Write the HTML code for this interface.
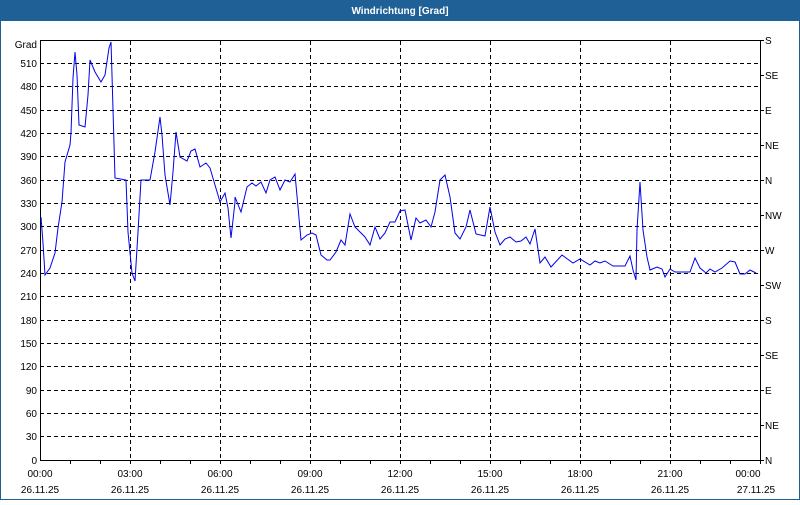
<!DOCTYPE html>
<html><head><meta charset="utf-8"><style>
html,body{margin:0;padding:0;background:#fff}
body{width:800px;height:500px;overflow:hidden;font-family:"Liberation Sans",sans-serif}
</style></head><body>
<svg width="800" height="500" xmlns="http://www.w3.org/2000/svg" font-family="Liberation Sans, sans-serif" font-size="10">
<rect x="0" y="0" width="800" height="500" fill="#1f6196"/>
<rect x="1" y="21" width="798" height="478" fill="#fff"/>
<text x="400" y="14" fill="#fff" font-weight="bold" text-anchor="middle" font-size="10">Windrichtung [Grad]</text>
<g stroke="#000" stroke-dasharray="4,3" stroke-width="1">
<path d="M40 63.5H760M40 86.5H760M40 110.5H760M40 133.5H760M40 156.5H760M40 180.5H760M40 203.5H760M40 226.5H760M40 250.5H760M40 273.5H760M40 296.5H760M40 320.5H760M40 343.5H760M40 366.5H760M40 390.5H760M40 413.5H760M40 436.5H760"/>
<path d="M130.5 41V460M220.5 41V460M310.5 41V460M400.5 41V460M490.5 41V460M580.5 41V460M670.5 41V460"/>
</g>
<rect x="40.5" y="40.5" width="720" height="420" fill="none" stroke="#000"/>
<g stroke="#000">
<path d="M760 40.5h4M760 75.5h4M760 110.5h4M760 145.5h4M760 180.5h4M760 215.5h4M760 250.5h4M760 285.5h4M760 320.5h4M760 355.5h4M760 390.5h4M760 425.5h4M760 460.5h4"/>
<path d="M70.5 460v4M100.5 460v4M130.5 460v4M160.5 460v4M190.5 460v4M220.5 460v4M250.5 460v4M280.5 460v4M310.5 460v4M340.5 460v4M370.5 460v4M400.5 460v4M430.5 460v4M460.5 460v4M490.5 460v4M520.5 460v4M550.5 460v4M580.5 460v4M610.5 460v4M640.5 460v4M670.5 460v4M700.5 460v4M730.5 460v4M760.5 460v4"/>
</g>
<polyline fill="none" stroke="#0000ee" stroke-width="1" points="41,217 43,243 45,275 50,268 55,253 58,228 62,202 65,162 70,145 71,133 73,78 75,52 77,75 79,125 85,127 88,95 90,60 95,72 101,82 105,75 109,48 111,42 112,75 115,178 126,180 128,232 132,273 135,281 138,232 141,180 150,180 155,152 160,117 162,135 165,175 170,205 173,172 176,132 180,157 187,161 191,151 195,149 200,167 206,163 210,168 215,185 220,202 225,193 228,208 231,238 235,202 235,197 241,212 247,187 252,183 256,186 261,182 266,193 270,180 275,177 280,190 285,180 290,182 295,174 301,240 307,235 312,233 316,235 321,255 327,260 330,260 336,252 341,240 345,245 350,214 355,227 365,237 370,245 375,227 380,239 385,233 390,222 395,222 400,211 405,210 411,240 416,218 420,223 426,220 431,227 435,212 440,180 445,175 450,197 455,233 460,239 466,227 470,210 476,234 485,236 490,207 495,232 500,245 505,239 510,237 516,242 521,241 526,237 530,244 535,229 540,263 545,257 551,267 562,255 573,263 580,259 590,265 595,261 600,263 605,261 613,266 625,266 630,256 633,270 636,280 637,230 640,182 643,230 647,257 650,270 657,267 662,269 665,277 670,269 675,272 690,272 695,258 700,268 706,273 710,269 715,272 722,268 730,261 735,262 740,274 745,274 750,270 756,273"/>
<g fill="#000" text-anchor="end">
<text x="37" y="48">Grad</text>
<text x="37" y="67">510</text><text x="37" y="90">480</text><text x="37" y="114">450</text><text x="37" y="137">420</text><text x="37" y="160">390</text><text x="37" y="184">360</text><text x="37" y="207">330</text><text x="37" y="230">300</text><text x="37" y="254">270</text><text x="37" y="277">240</text><text x="37" y="300">210</text><text x="37" y="324">180</text><text x="37" y="347">150</text><text x="37" y="370">120</text><text x="37" y="394">90</text><text x="37" y="417">60</text><text x="37" y="440">30</text><text x="37" y="464">0</text>
</g>
<g fill="#000">
<text x="765" y="44">S</text><text x="765" y="79">SE</text><text x="765" y="114">E</text><text x="765" y="149">NE</text><text x="765" y="184">N</text><text x="765" y="219">NW</text><text x="765" y="254">W</text><text x="765" y="289">SW</text><text x="765" y="324">S</text><text x="765" y="359">SE</text><text x="765" y="394">E</text><text x="765" y="429">NE</text><text x="765" y="464">N</text>
</g>
<g fill="#000" text-anchor="middle">
<text x="40" y="477">00:00</text><text x="130" y="477">03:00</text><text x="220" y="477">06:00</text><text x="310" y="477">09:00</text><text x="400" y="477">12:00</text><text x="490" y="477">15:00</text><text x="580" y="477">18:00</text><text x="670" y="477">21:00</text><text x="748" y="477">00:00</text>
<text x="40" y="493">26.11.25</text><text x="130" y="493">26.11.25</text><text x="220" y="493">26.11.25</text><text x="310" y="493">26.11.25</text><text x="400" y="493">26.11.25</text><text x="490" y="493">26.11.25</text><text x="580" y="493">26.11.25</text><text x="670" y="493">26.11.25</text><text x="756" y="493">27.11.25</text>
</g>
</svg>
</body></html>
